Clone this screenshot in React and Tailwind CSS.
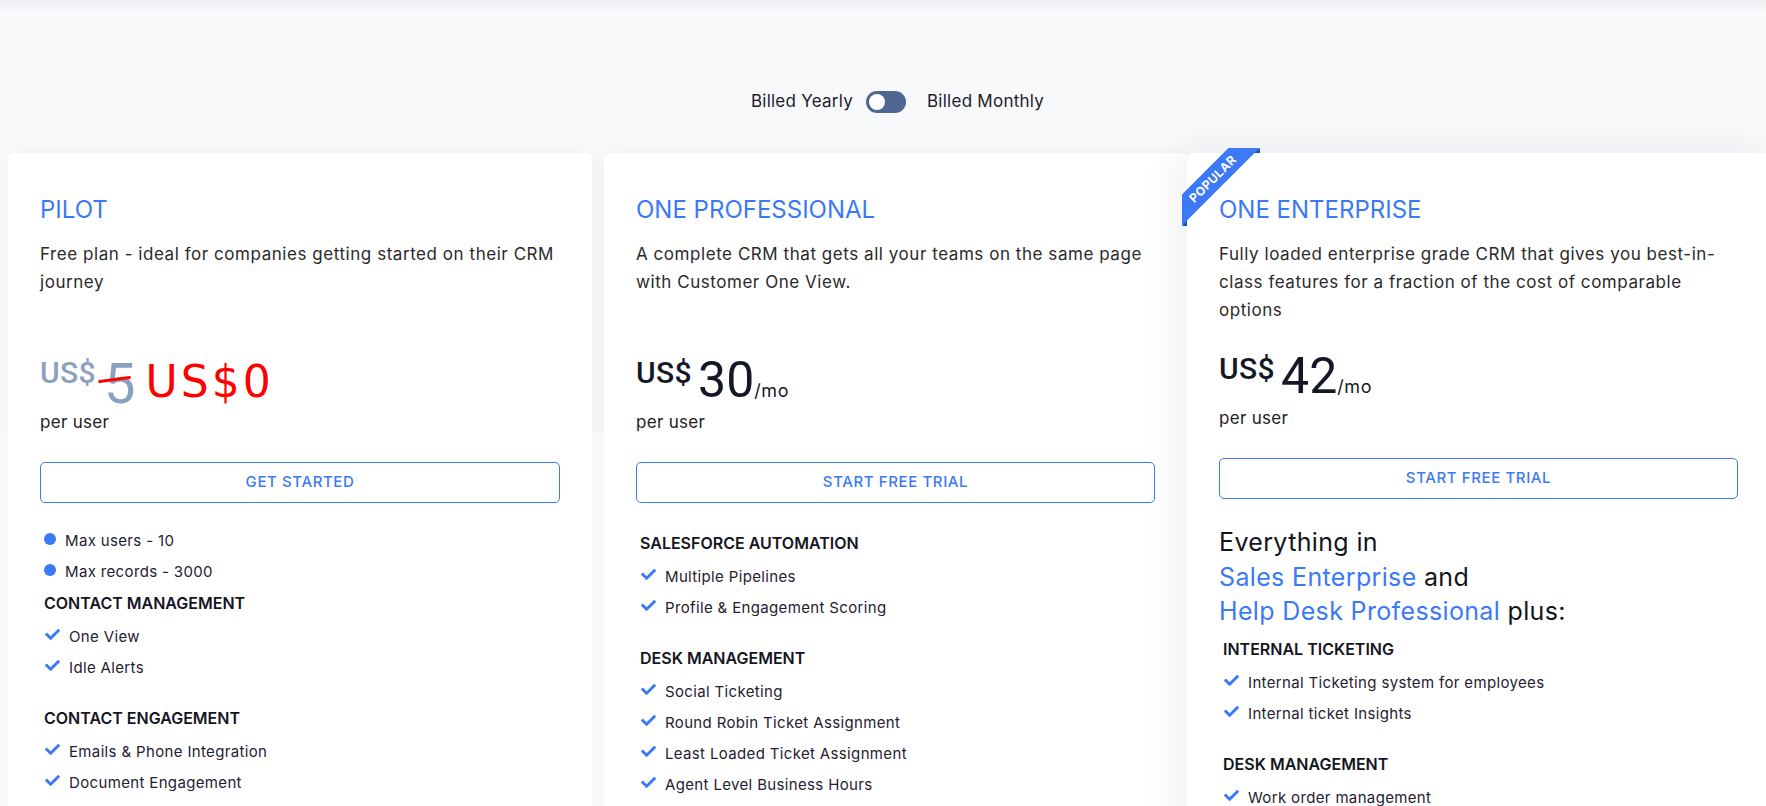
import React from "react";

const BLUE = "text-[#3b79f6]";

function Check() {
  return (
    <svg viewBox="0 0 512 512" className="h-[15px] w-[15px] shrink-0 fill-[#3b79f6]" aria-hidden="true">
      <path d="M173.898 439.404l-166.4-166.4c-9.997-9.997-9.997-26.206 0-36.204l36.203-36.204c9.997-9.998 26.207-9.998 36.204 0L192 312.69 432.095 72.596c9.997-9.997 26.207-9.997 36.204 0l36.203 36.204c9.997 9.997 9.997 26.206 0 36.204l-294.4 294.401c-9.998 9.997-26.207 9.997-36.204-.001z" />
    </svg>
  );
}

function FeatureGroup({ title, items, className = "" }) {
  return (
    <div className={className}>
      <h3 className="pl-[4px] text-[16px] font-semibold leading-[24px] text-[#15151f]">{title}</h3>
      <ul className="mt-[12px] flex flex-col gap-[11px]">
        {items.map((t) => (
          <li
            key={t}
            className="flex h-[20px] items-start pl-[5px] text-[15px] leading-[20px] tracking-[0.35px] text-[#1f2130]"
          >
            <Check />
            <span className="ml-[9px]">{t}</span>
          </li>
        ))}
      </ul>
    </div>
  );
}

function OutlineButton({ children, className = "" }) {
  return (
    <button
      className={`flex h-[41px] w-full items-center justify-center rounded-[5px] border border-[#3b79f6] bg-white text-[15px] font-medium tracking-[0.6px] ${BLUE} ${className}`}
    >
      {children}
    </button>
  );
}

function PerMonth({ amount }) {
  return (
    <div className="mt-[31px] flex h-[50px] items-start font-[family-name:Roboto,sans-serif] text-[#141826]">
      <span className="mt-[3px] text-[30px] font-medium leading-[30px] tracking-[0.4px]">US$</span>
      <span className="ml-[6px] flex items-baseline">
        <span className="text-[50px] leading-[50px]">{amount}</span>
        <span className="font-[family-name:Inter,sans-serif] text-[18px] leading-[20px] tracking-[0.6px]">/mo</span>
      </span>
    </div>
  );
}

function Ribbon() {
  return (
    <>
      <div className="pointer-events-none absolute left-[-5px] top-[-5px] h-[78px] w-[78px] overflow-hidden">
        <div className="absolute left-[-29px] top-[20px] flex h-[22px] w-[120px] -rotate-45 items-center justify-center bg-[#3b79f6] text-[12px] font-bold leading-none tracking-[0.5px] text-white">
          POPULAR
        </div>
      </div>
      <div className="absolute left-[-5px] top-[67px] h-[6px] w-[5px] bg-[#1f4fb8] [clip-path:polygon(100%_0,100%_100%,0_100%)]" />
      <div className="absolute left-[67px] top-[-5px] h-[5px] w-[6px] bg-[#1f4fb8] [clip-path:polygon(100%_0,100%_100%,0_100%)]" />
    </>
  );
}

const DESC = "mt-[14px] min-h-[84px] text-[17px] leading-[28px] tracking-[0.55px] text-[#2a2a2a]";
const PER_USER = "mt-[3px] text-[17px] leading-[28px] tracking-[0.3px] text-[#222]";

export default function App() {
  return (
    <div className="relative h-[806px] w-full overflow-hidden bg-[linear-gradient(to_bottom,#f8f9fb_432px,#fcfcfd_432px)] font-[family-name:Inter,sans-serif] text-[#262626]">
      <div className="h-[12px] bg-gradient-to-b from-[#eceef1] to-[#f8f9fb]" />

      {/* billing period switch */}
      <div className="mt-[77px] grid h-[24px] grid-cols-[1fr_auto_1fr] items-center pl-[6px] text-[17px] tracking-[0.25px] text-[#1c1c2b]">
        <span className="mr-[13px] justify-self-end">Billed Yearly</span>
        <button className="relative h-[22px] w-[40px] rounded-full bg-[#4f6692]" aria-label="Billing period">
          <span className="absolute left-[3px] top-[3px] h-[16px] w-[16px] rounded-full bg-white" />
        </button>
        <span className="ml-[21px]">Billed Monthly</span>
      </div>

      <div className="mt-[40px] flex items-start pl-2">
        {/* Pilot */}
        <section className="h-[700px] w-[584px] shrink-0 rounded-[6px] bg-white px-8 pt-[41px] shadow-[0_0_18px_rgba(15,23,42,0.04)]">
          <h2 className={`text-[24px] leading-[32px] ${BLUE}`}>PILOT</h2>
          <p className={DESC}>
            Free plan - ideal for companies getting started on their CRM
            <br />
            journey
          </p>
          <div className="mt-[31px] flex h-[50px] items-start font-[family-name:Roboto,sans-serif] text-[#8aa0bf]">
            <span className="mt-[3px] text-[30px] font-medium leading-[30px] tracking-[0.4px]">US$</span>
            <span className="relative ml-[8px] mt-[4px] text-[56px] leading-[50px]">
              5
              <span className="absolute left-[-6px] top-[19px] h-[3px] w-[33px] -rotate-[8deg] rounded-full bg-[#ff0000]" />
            </span>
            <span className="ml-[10px] mt-[5px] font-[family-name:'DejaVu_Sans',sans-serif] text-[44px] leading-[44px] tracking-[3px] text-[#ff0000]">
              US$0
            </span>
          </div>
          <p className={PER_USER}>per user</p>
          <OutlineButton className="mt-[26px]">GET STARTED</OutlineButton>

          <ul className="mt-[28px] flex flex-col gap-[11px]">
            {["Max users - 10", "Max records - 3000"].map((t) => (
              <li
                key={t}
                className="flex h-[20px] items-start pl-[4px] text-[15px] leading-[20px] tracking-[0.35px] text-[#1f2130]"
              >
                <span className="mt-[2px] h-[12px] w-[12px] shrink-0 rounded-full bg-[#3b79f6]" />
                <span className="ml-[9px]">{t}</span>
              </li>
            ))}
          </ul>
          <FeatureGroup className="mt-[9px]" title="CONTACT MANAGEMENT" items={["One View", "Idle Alerts"]} />
          <FeatureGroup
            className="mt-[28px]"
            title="CONTACT ENGAGEMENT"
            items={["Emails & Phone Integration", "Document Engagement"]}
          />
        </section>

        {/* One Professional */}
        <section className="ml-3 h-[700px] w-[583px] shrink-0 rounded-[6px] bg-white px-8 pt-[41px] shadow-[0_0_18px_rgba(15,23,42,0.04)]">
          <h2 className={`text-[24px] leading-[32px] ${BLUE}`}>ONE PROFESSIONAL</h2>
          <p className={DESC}>
            A complete CRM that gets all your teams on the same page
            <br />
            with Customer One View.
          </p>
          <PerMonth amount="30" />
          <p className={PER_USER}>per user</p>
          <OutlineButton className="mt-[26px]">START FREE TRIAL</OutlineButton>

          <FeatureGroup
            className="mt-[28px]"
            title="SALESFORCE AUTOMATION"
            items={["Multiple Pipelines", "Profile & Engagement Scoring"]}
          />
          <FeatureGroup
            className="mt-[28px]"
            title="DESK MANAGEMENT"
            items={[
              "Social Ticketing",
              "Round Robin Ticket Assignment",
              "Least Loaded Ticket Assignment",
              "Agent Level Business Hours",
            ]}
          />
        </section>

        {/* One Enterprise */}
        <section className="relative z-10 h-[700px] w-[583px] shrink-0 rounded-[6px] bg-white px-8 pt-[41px] shadow-[-8px_0_40px_rgba(15,23,42,0.07)]">
          <Ribbon />
          <h2 className={`text-[24px] leading-[32px] ${BLUE}`}>ONE ENTERPRISE</h2>
          <p className={DESC}>
            Fully loaded enterprise grade CRM that gives you best-in-
            <br />
            class features for a fraction of the cost of comparable
            <br />
            options
          </p>
          <div className="-mt-[4px]">
            <PerMonth amount="42" />
          </div>
          <p className={PER_USER}>per user</p>
          <OutlineButton className="mt-[26px]">START FREE TRIAL</OutlineButton>

          <p className="mt-[26px] text-[25px] leading-[34.7px] tracking-[0.35px] text-[#141420]">
            Everything in
            <br />
            <span className={BLUE}>Sales Enterprise</span> and
            <br />
            <span className={BLUE}>Help Desk Professional</span> plus:
          </p>
          <FeatureGroup
            className="mt-[8px]"
            title="INTERNAL TICKETING"
            items={["Internal Ticketing system for employees", "Internal ticket Insights"]}
          />
          <FeatureGroup className="mt-[28px]" title="DESK MANAGEMENT" items={["Work order management"]} />
        </section>
      </div>
    </div>
  );
}
